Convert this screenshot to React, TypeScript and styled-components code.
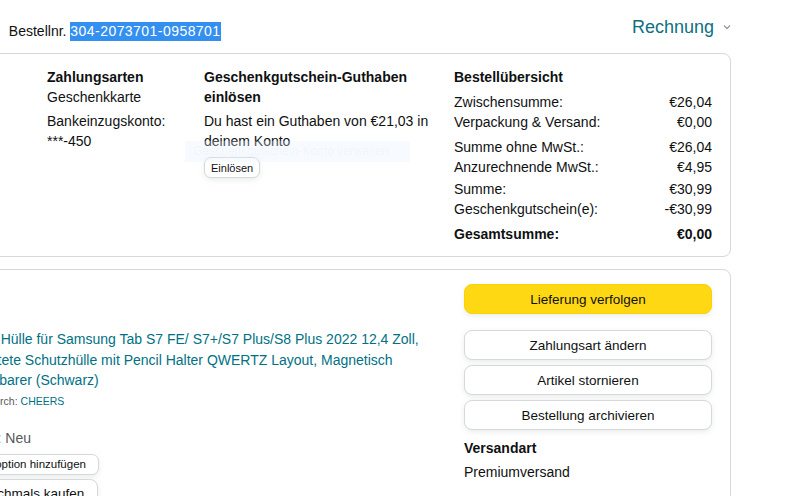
import styled, { createGlobalStyle } from "styled-components";

const GlobalStyle = createGlobalStyle`
  html, body {
    margin: 0;
    padding: 0;
    background: #fff;
    overflow: hidden;
  }
  body {
    font-family: "Liberation Sans", Arial, sans-serif;
    font-size: 14px;
    line-height: 20px;
    color: #0f1111;
  }
`;

const SUMMARY_GROUPS = [
  [
    ["Zwischensumme:", "€26,04"],
    ["Verpackung & Versand:", "€0,00"],
  ],
  [
    ["Summe ohne MwSt.:", "€26,04"],
    ["Anzurechnende MwSt.:", "€4,95"],
  ],
  [
    ["Summe:", "€30,99"],
    ["Geschenkgutschein(e):", "-€30,99"],
  ],
];

const ACTIONS = ["Zahlungsart ändern", "Artikel stornieren", "Bestellung archivieren"];

const App = () => {
  return (
    <>
      <GlobalStyle />
      <Page>
        {/* ---------------- Header ---------------- */}
        <Header>
          <OrderMeta>
            <span>Bestellt am 5. März 2023</span>
            <span>
              Bestellnr. <Selected>304-2073701-0958701</Selected>
            </span>
          </OrderMeta>
          <InvoiceLink>
            Rechnung
            <svg width="8" height="6" viewBox="0 0 8 6">
              <path d="M1 1.5 L4 4.5 L7 1.5" fill="none" stroke="#9a9a9a" strokeWidth="1.3" />
            </svg>
          </InvoiceLink>
        </Header>

        {/* ---------------- Summary ---------------- */}
        <SummaryCard>
          <Column>
            <Label>Lieferadresse</Label>
            <div>Max Müller</div>
            <div>Hauptstr. 12</div>
            <div>10115 Berlin</div>
            <div>Deutschland</div>
          </Column>
          <Column>
            <Label>Zahlungsarten</Label>
            <div>Geschenkkarte</div>
            <Spaced>Bankeinzugskonto:</Spaced>
            <div>***-450</div>
          </Column>
          <Column>
            <Label>Geschenkgutschein-Guthaben einlösen</Label>
            <Spaced>Du hast ein Guthaben von €21,03 in deinem Konto</Spaced>
            <SmallButton $size={11} $pad={6}>
              Einlösen
            </SmallButton>
            <FadedHint>Geschenkgutschein-Konto verwalten</FadedHint>
          </Column>
          <Column>
            <Label>Bestellübersicht</Label>
            {SUMMARY_GROUPS.map((group, i) => (
              <SumGroup key={i} $gap={i === 2 ? 2 : 5}>
                {group.map(([label, value]) => (
                  <SumRow key={label}>
                    <span>{label}</span>
                    <span>{value}</span>
                  </SumRow>
                ))}
              </SumGroup>
            ))}
            <SumGroup $gap={5}>
              <SumRow $bold>
                <span>Gesamtsumme:</span>
                <span>€0,00</span>
              </SumRow>
            </SumGroup>
          </Column>
        </SummaryCard>

        {/* ---------------- Item ---------------- */}
        <ItemCard>
          <Thumb />
          <Details>
            <Title>
              Tastatur Hülle für Samsung Tab S7 FE/ S7+/S7 Plus/S8 Plus 2022 12,4 Zoll,
              <br />
              Beleuchtete Schutzhülle mit Pencil Halter QWERTZ Layout, Magnetisch
              <br />
              Abnehmbarer (Schwarz)
            </Title>
            <Seller>
              Verkauft durch: <a>CHEERS</a>
            </Seller>
            <Condition>Zustand: Neu</Condition>
            <SmallButton $size={11.5} $pad={12}>
              Schutzoption hinzufügen
            </SmallButton>
            <BuyAgain>
              <svg width="18" height="18" viewBox="0 0 24 24" fill="none" stroke="#0f1111" strokeWidth="2">
                <path d="M3 12a9 9 0 1 0 3-6.7L3 8" />
                <path d="M3 3v5h5" />
              </svg>
              Nochmals kaufen
            </BuyAgain>
          </Details>
          <Actions>
            <PrimaryButton>Lieferung verfolgen</PrimaryButton>
            <ButtonStack>
              {ACTIONS.map((a) => (
                <SecondaryButton key={a}>{a}</SecondaryButton>
              ))}
            </ButtonStack>
            <ShipLabel>Versandart</ShipLabel>
            <div>Premiumversand</div>
          </Actions>
        </ItemCard>
      </Page>
    </>
  );
};

export default App;

const Page = styled.div`
  width: 891px;
  margin-left: -160px;
  padding-top: 18px;
`;

const Header = styled.header`
  display: flex;
  align-items: center;
  justify-content: space-between;
  height: 26px;
  margin-bottom: 9px;
`;

const OrderMeta = styled.div`
  display: flex;
  gap: 14px;
  white-space: nowrap;
`;

const Selected = styled.span`
  display: inline-block;
  background: #3390f0;
  color: #fff;
  line-height: 19px;
  letter-spacing: 0.45px;
`;

const InvoiceLink = styled.a`
  display: flex;
  align-items: center;
  gap: 9px;
  margin-bottom: 8px;
  font-size: 18px;
  line-height: 24px;
  color: #0f6f7f;
`;

const Card = styled.section`
  border: 1px solid #d5d9d9;
  border-radius: 8px;
  background: #fff;
`;

const SummaryCard = styled(Card)`
  display: grid;
  grid-template-columns: 174px 143px 236px 258px;
  column-gap: 14px;
  padding: 13px 18px 12px;
`;

const Column = styled.div`
  position: relative;
  display: flex;
  flex-direction: column;
  align-items: flex-start;
  & > div {
    width: 100%;
  }
`;

const Label = styled.div`
  font-weight: 700;
`;

const Spaced = styled.div`
  margin-top: 4px;
`;

const SmallButton = styled.button<{ $size: number; $pad: number }>`
  margin-top: 6px;
  height: 21px;
  padding: 0 ${(p) => p.$pad}px;
  font-family: inherit;
  font-size: ${(p) => p.$size}px;
  color: #0f1111;
  background: #fff;
  border: 1px solid #d5d9d9;
  border-radius: 7px;
  box-shadow: 0 2px 5px rgba(213, 217, 217, 0.5);
  white-space: nowrap;
`;

const FadedHint = styled.span`
  position: absolute;
  left: -19px;
  top: 74px;
  width: 225px;
  height: 21px;
  padding-left: 8px;
  box-sizing: border-box;
  background: rgba(228, 240, 255, 0.3);
  color: rgba(130, 170, 230, 0.07);
  font-size: 12px;
  line-height: 21px;
`;

const SumGroup = styled.div<{ $gap: number }>`
  margin-top: ${(p) => p.$gap}px;
`;

const SumRow = styled.div<{ $bold?: boolean }>`
  display: flex;
  justify-content: space-between;
  font-weight: ${(p) => (p.$bold ? 700 : 400)};
`;

const ItemCard = styled(Card)`
  display: grid;
  grid-template-columns: 76px 1fr 248px;
  column-gap: 12px;
  margin-top: 12px;
  padding: 14px 18px 40px;
`;

const Thumb = styled.div`
  margin-top: 45px;
  width: 76px;
  height: 76px;
  border-radius: 4px;
  background: #2b2d31;
`;

const Details = styled.div`
  display: flex;
  flex-direction: column;
  align-items: flex-start;
  padding-top: 45px;
  white-space: nowrap;
`;

const Title = styled.a`
  color: #007185;
  line-height: 20.5px;
`;

const Seller = styled.div`
  margin-top: 1px;
  font-size: 10.5px;
  line-height: 18px;
  color: #565959;
  a {
    color: #007185;
  }
`;

const Condition = styled.div`
  margin-top: 18px;
  color: #565959;
`;

const BaseButton = styled.button`
  width: 100%;
  height: 30px;
  font-family: inherit;
  font-size: 13.5px;
  color: #0f1111;
  border-radius: 8px;
  cursor: pointer;
`;

const PrimaryButton = styled(BaseButton)`
  background: #ffd814;
  border: 1px solid #fcd200;
  box-shadow: 0 2px 5px rgba(213, 217, 217, 0.5);
`;

const SecondaryButton = styled(BaseButton)`
  background: #fff;
  border: 1px solid #d5d9d9;
  box-shadow: 0 2px 5px rgba(213, 217, 217, 0.5);
`;

const BuyAgain = styled(SecondaryButton)`
  display: flex;
  align-items: center;
  gap: 8px;
  width: auto;
  margin-top: 4px;
  padding: 0 13px 0 6px;
`;

const Actions = styled.div`
  display: flex;
  flex-direction: column;
`;

const ButtonStack = styled.div`
  display: flex;
  flex-direction: column;
  gap: 5px;
  margin-top: 16px;
`;

const ShipLabel = styled.div`
  margin-top: 8px;
  margin-bottom: 4px;
  font-weight: 700;
`;
